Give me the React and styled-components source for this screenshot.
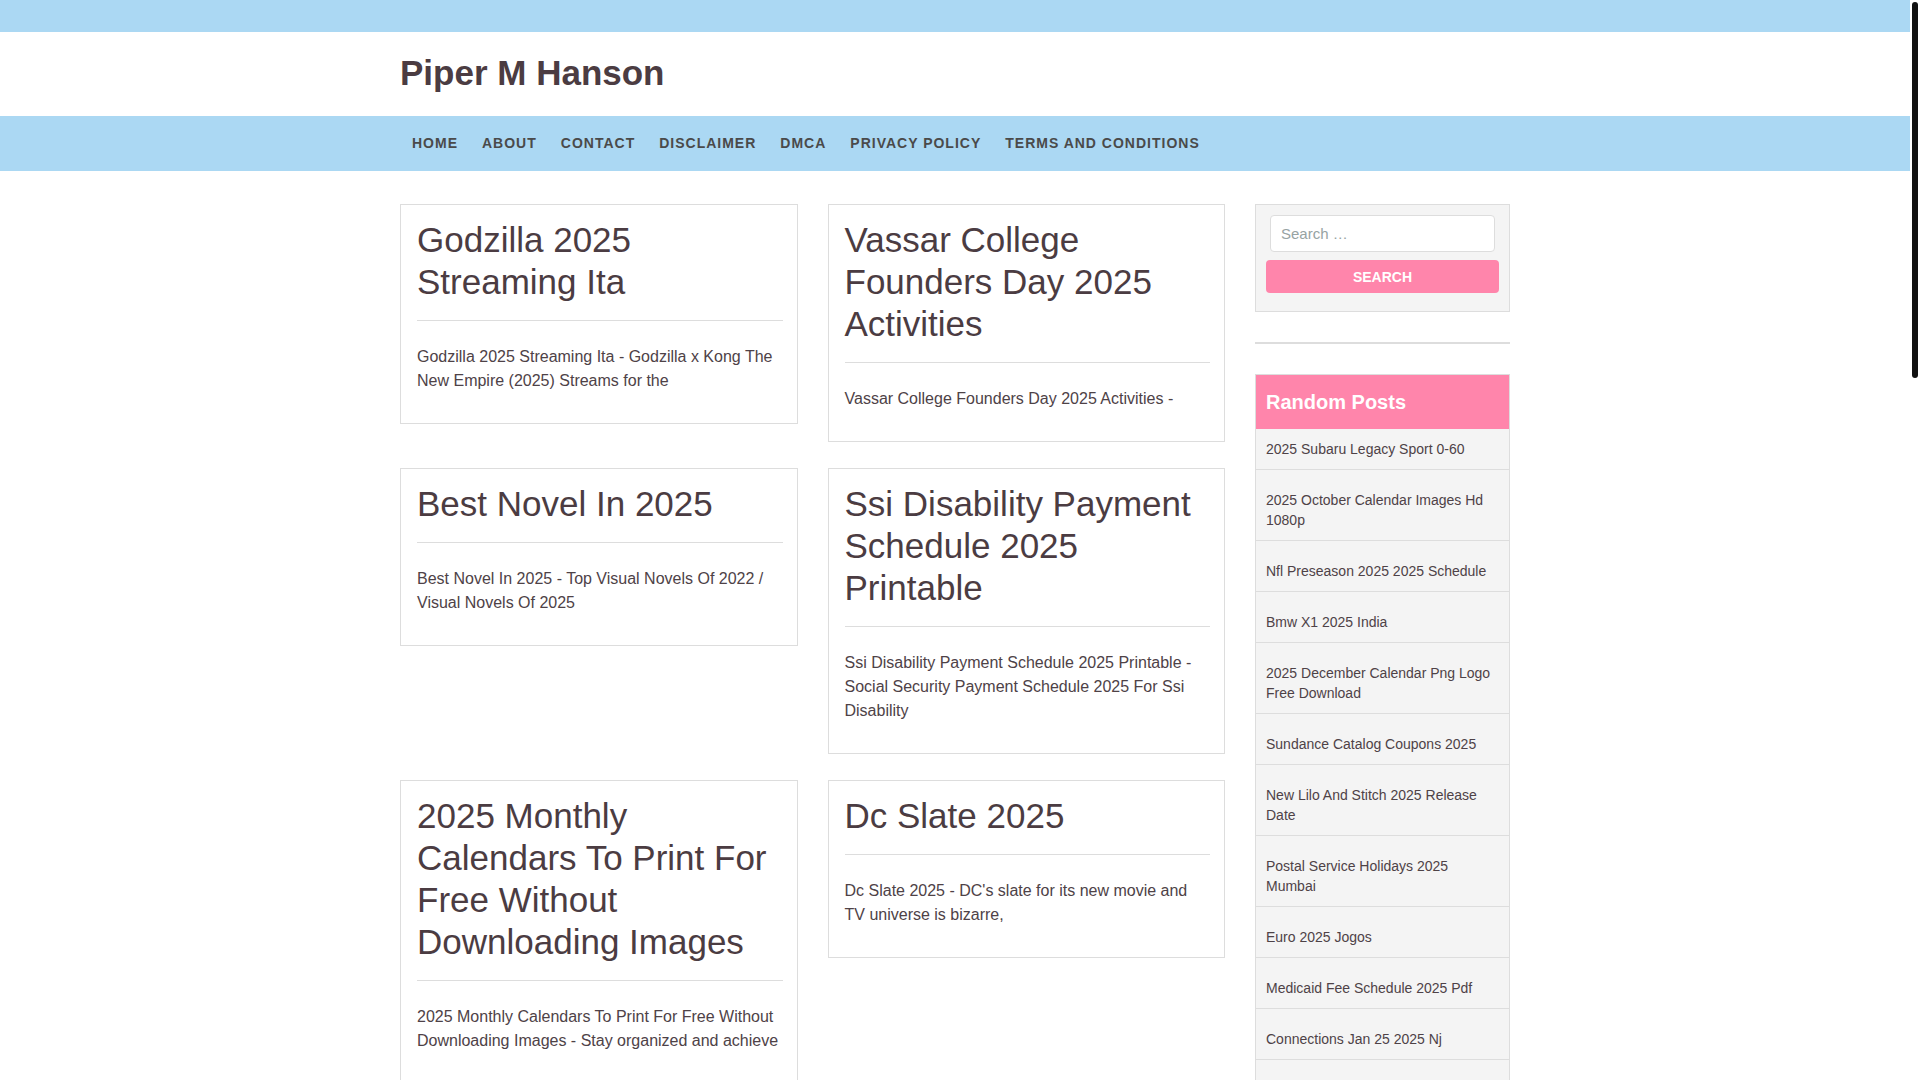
import React from 'react'
import styled, { createGlobalStyle } from 'styled-components'

const posts = [
    {
        title: 'Godzilla 2025 Streaming Ita',
        excerpt: 'Godzilla 2025 Streaming Ita - Godzilla x Kong The New Empire (2025) Streams for the',
    },
    {
        title: 'Vassar College Founders Day 2025 Activities',
        excerpt: 'Vassar College Founders Day 2025 Activities -',
    },
    {
        title: 'Best Novel In 2025',
        excerpt: 'Best Novel In 2025 - Top Visual Novels Of 2022 / Visual Novels Of 2025',
    },
    {
        title: 'Ssi Disability Payment Schedule 2025 Printable',
        excerpt: 'Ssi Disability Payment Schedule 2025 Printable - Social Security Payment Schedule 2025 For Ssi Disability',
    },
    {
        title: '2025 Monthly Calendars To Print For Free Without Downloading Images',
        excerpt: '2025 Monthly Calendars To Print For Free Without Downloading Images - Stay organized and achieve',
    },
    {
        title: 'Dc Slate 2025',
        excerpt: "Dc Slate 2025 - DC's slate for its new movie and TV universe is bizarre,",
    },
]

const randomPosts = [
    '2025 Subaru Legacy Sport 0-60',
    '2025 October Calendar Images Hd 1080p',
    'Nfl Preseason 2025 2025 Schedule',
    'Bmw X1 2025 India',
    '2025 December Calendar Png Logo Free Download',
    'Sundance Catalog Coupons 2025',
    'New Lilo And Stitch 2025 Release Date',
    'Postal Service Holidays 2025 Mumbai',
    'Euro 2025 Jogos',
    'Medicaid Fee Schedule 2025 Pdf',
    'Connections Jan 25 2025 Nj',
    'Toyota Tacoma 2025 Release Date',
]

const menu = ['Home', 'About', 'Contact', 'Disclaimer', 'DMCA', 'Privacy Policy', 'Terms and Conditions']

function App() {
    return (
        <>
            <GlobalStyle />
            <TopBar />
            <Header>
                <Container>
                    <SiteTitle href="#">Piper M Hanson</SiteTitle>
                </Container>
            </Header>
            <NavBar>
                <Container>
                    <NavList>
                        {menu.map((item) => (
                            <li key={item}>
                                <NavLink href="#">{item}</NavLink>
                            </li>
                        ))}
                    </NavList>
                </Container>
            </NavBar>
            <Main>
                <Container>
                    <Layout>
                        <PostGrid>
                            {posts.map((post) => (
                                <PostCard key={post.title}>
                                    <PostTitle>{post.title}</PostTitle>
                                    <Divider />
                                    <Excerpt>{post.excerpt}</Excerpt>
                                </PostCard>
                            ))}
                        </PostGrid>
                        <Sidebar>
                            <SearchWidget>
                                <SearchInput type="search" placeholder="Search …" />
                                <SearchButton type="button">Search</SearchButton>
                            </SearchWidget>
                            <WidgetRule />
                            <RandomWidget>
                                <WidgetTitle>Random Posts</WidgetTitle>
                                <PostList>
                                    {randomPosts.map((item) => (
                                        <PostItem key={item}>
                                            <a href="#">{item}</a>
                                        </PostItem>
                                    ))}
                                </PostList>
                            </RandomWidget>
                        </Sidebar>
                    </Layout>
                </Container>
            </Main>
            <ScrollThumb />
        </>
    )
}

export default App

const GlobalStyle = createGlobalStyle`
    * {
        box-sizing: border-box;
    }
    html {
        overflow: hidden;
    }
    body {
        margin: 0;
        padding-right: 10px;
        background: #fff;
        font-family: "Liberation Sans", Arial, sans-serif;
        color: #4e4247;
    }
    a {
        text-decoration: none;
        color: inherit;
    }
`

// stands in for the page scrollbar that sits in the right gutter
const ScrollThumb = styled.div`
    position: fixed;
    top: 2px;
    right: 2px;
    width: 6px;
    height: 376px;
    border-radius: 3px;
    background: #111;
`

const TopBar = styled.div`
    height: 32px;
    background: #abd8f3;
`

const Container = styled.div`
    max-width: 1140px;
    margin: 0 auto;
    padding: 0 15px;
`

const Header = styled.header`
    padding: 20px 0 22px;
    background: #fff;
`

const SiteTitle = styled.a`
    display: inline-block;
    font-size: 35px;
    line-height: 42px;
    font-weight: 700;
    color: #4b3c42;
`

const NavBar = styled.nav`
    background: #abd8f3;
`

const NavList = styled.ul`
    display: flex;
    margin: 0;
    padding: 0;
    list-style: none;
`

const NavLink = styled.a`
    display: block;
    padding: 0 12px;
    line-height: 55px;
    font-size: 14px;
    font-weight: 700;
    letter-spacing: 1px;
    text-transform: uppercase;
    color: #4a4a4a;

    &:hover {
        color: #ff85ab;
    }
`

const Main = styled.main`
    padding-top: 33px;
`

const Layout = styled.div`
    display: grid;
    grid-template-columns: 825px 255px;
    column-gap: 30px;
    align-items: start;
`

const PostGrid = styled.div`
    display: grid;
    grid-template-columns: 1fr 1fr;
    gap: 26px 30px;
    align-items: start;
    align-content: start;
`

const PostCard = styled.article`
    border: 1px solid #ddd;
    padding: 14px 14px 14px 16px;
`

const PostTitle = styled.h2`
    margin: 0;
    font-size: 35px;
    line-height: 42px;
    font-weight: 400;
    color: #4b3c42;
`

const Divider = styled.hr`
    margin: 17px 0 24px;
    border: 0;
    border-top: 1px solid #ddd;
`

const Excerpt = styled.p`
    margin: 0 0 16px;
    font-size: 16px;
    line-height: 24px;
    color: #4e4247;
`

const Sidebar = styled.aside`
    display: flex;
    flex-direction: column;
`

const SearchWidget = styled.div`
    display: flex;
    flex-direction: column;
    padding: 10px 10px 18px;
    background: #f4f4f4;
    border: 1px solid #ddd;
`

const SearchInput = styled.input`
    height: 37px;
    margin: 0 4px 8px;
    padding: 0 10px;
    border: 1px solid #ddd;
    border-radius: 4px;
    background: #fff;
    font-family: "Liberation Sans", Arial, sans-serif;
    font-size: 15px;
    color: #4e4247;
    outline: none;

    &::placeholder {
        color: #97a3a3;
    }
`

const SearchButton = styled.button`
    height: 33px;
    border: 0;
    border-radius: 4px;
    background: #ff85ab;
    font-family: "Liberation Sans", Arial, sans-serif;
    font-size: 14px;
    font-weight: 700;
    text-transform: uppercase;
    color: #fff;
    cursor: pointer;
`

const WidgetRule = styled.hr`
    width: 100%;
    margin: 30px 0;
    border: 0;
    border-top: 2px solid #ddd;
`

const RandomWidget = styled.div`
    border: 1px solid #ddd;
    background: #f4f4f4;
`

const WidgetTitle = styled.h3`
    margin: 0;
    padding: 16px 10px;
    background: #ff85ab;
    font-size: 20px;
    line-height: 22px;
    font-weight: 700;
    color: #fff;
`

const PostList = styled.ul`
    margin: 0;
    padding: 0;
    list-style: none;
`

const PostItem = styled.li`
    padding: 20px 10px 10px;
    border-bottom: 1px solid #ddd;
    font-size: 14px;
    line-height: 20px;
    color: #4e4247;

    &:first-child {
        padding-top: 10px;
    }
`
